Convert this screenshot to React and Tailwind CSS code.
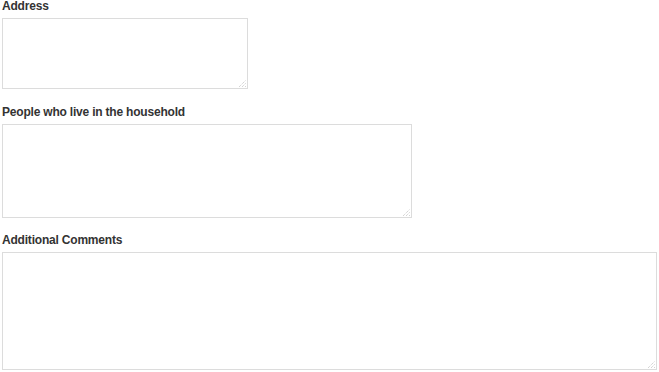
function Grip() {
  return (
    <svg className="absolute right-[2px] bottom-[2px] pointer-events-none" width="8" height="8" viewBox="0 0 8 8">
      <path d="M1 8 L8 1 M4 8 L8 4 M7 8 L8 7" stroke="#c4c4c4" strokeWidth="1" strokeDasharray="1 1" />
    </svg>
  );
}

export default function App() {
  const fields = [
    { label: "Address", w: "w-[246px]", h: "h-[71px]", mt: "mt-0" },
    { label: "People who live in the household", w: "w-[410px]", h: "h-[94px]", mt: "mt-[17px]" },
    { label: "Additional Comments", w: "w-[655px]", h: "h-[118px]", mt: "mt-[16px]" },
  ];
  return (
    <div className="w-[659px] h-[372px] bg-white overflow-hidden px-[2px] font-['Liberation_Sans',Arial,sans-serif]">
      <div className="flex flex-col">
        {fields.map((f) => (
          <div key={f.label} className={`flex flex-col ${f.mt}`}>
            <label className="text-[12px] leading-[13px] font-bold tracking-[-0.2px] text-[#333] mb-[5px]">{f.label}</label>
            <div className={`relative ${f.w} ${f.h}`}>
              <textarea className="block w-full h-full resize-none border border-[#dcdcdc] bg-white outline-none" />
              <Grip />
            </div>
          </div>
        ))}
      </div>
    </div>
  );
}
